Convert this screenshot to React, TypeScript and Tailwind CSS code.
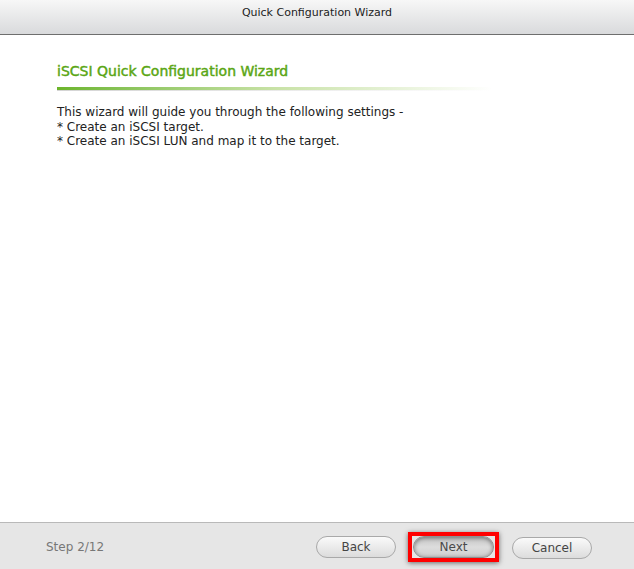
import React from "react";

const font = { fontFamily: '"DejaVu Sans", Verdana, sans-serif' };

function Btn({ label, pressed }: { label: string; pressed?: boolean }) {
  return (
    <button
      className={
        pressed
          ? "h-[22px] w-[81px] rounded-full border border-[#8f8f8f] bg-gradient-to-b from-[#c4c4c4] via-[#dddddd] to-[#cfcfcf] text-[12px] text-[#4a4a4a] shadow-[inset_0_1px_4px_rgba(0,0,0,0.45)]"
          : "h-[22px] w-[80px] rounded-full border border-[#a9a9a9] bg-gradient-to-b from-[#fafafa] to-[#dcdcdc] text-[12px] text-[#444]"
      }
    >
      {label}
    </button>
  );
}

export default function App() {
  return (
    <div className="flex h-[569px] w-[634px] flex-col bg-white" style={font}>
      <div className="flex h-[35px] shrink-0 items-start justify-center border-b border-[#6e6e6e] bg-gradient-to-b from-[#f7f7f7] to-[#d9dadc] pt-[5px] text-[11px] text-[#222]">
        Quick Configuration Wizard
      </div>
      <div className="flex-1 px-[57px] pt-[27px]">
        <div className="text-[14px] leading-[18px] text-[#5aa614] [-webkit-text-stroke:0.45px_#5aa614]">
          iSCSI Quick Configuration Wizard
        </div>
        <div className="mt-[7px] h-[3px] w-[435px] bg-gradient-to-r from-[#6cb52a] via-[#c8e2a6] to-transparent" />
        <div className="h-[1px] w-[435px] bg-gradient-to-r from-[#d4d4d4] to-transparent" />
        <div className="mt-[14px] text-[12px] leading-[14.5px] text-[#222]">
          <div>This wizard will guide you through the following settings -</div>
          <div>* Create an iSCSI target.</div>
          <div>* Create an iSCSI LUN and map it to the target.</div>
        </div>
      </div>
      <div className="flex h-[47px] shrink-0 items-center border-t border-[#b9b9b9] bg-[#e6e6e6] pl-[46px] pr-[42px]">
        <div className="pt-[2px] text-[12px] text-[#777]">Step 2/12</div>
        <div className="ml-auto flex items-center gap-[12px] pt-[2px]">
          <Btn label="Back" />
          <div className="flex h-[30px] w-[91px] items-center justify-center border-[4px] border-[#ff0000] shadow-[0_1px_5px_rgba(0,0,0,0.55)]">
            <Btn label="Next" pressed />
          </div>
          <div className="ml-[1px]">
            <Btn label="Cancel" />
          </div>
        </div>
      </div>
    </div>
  );
}
